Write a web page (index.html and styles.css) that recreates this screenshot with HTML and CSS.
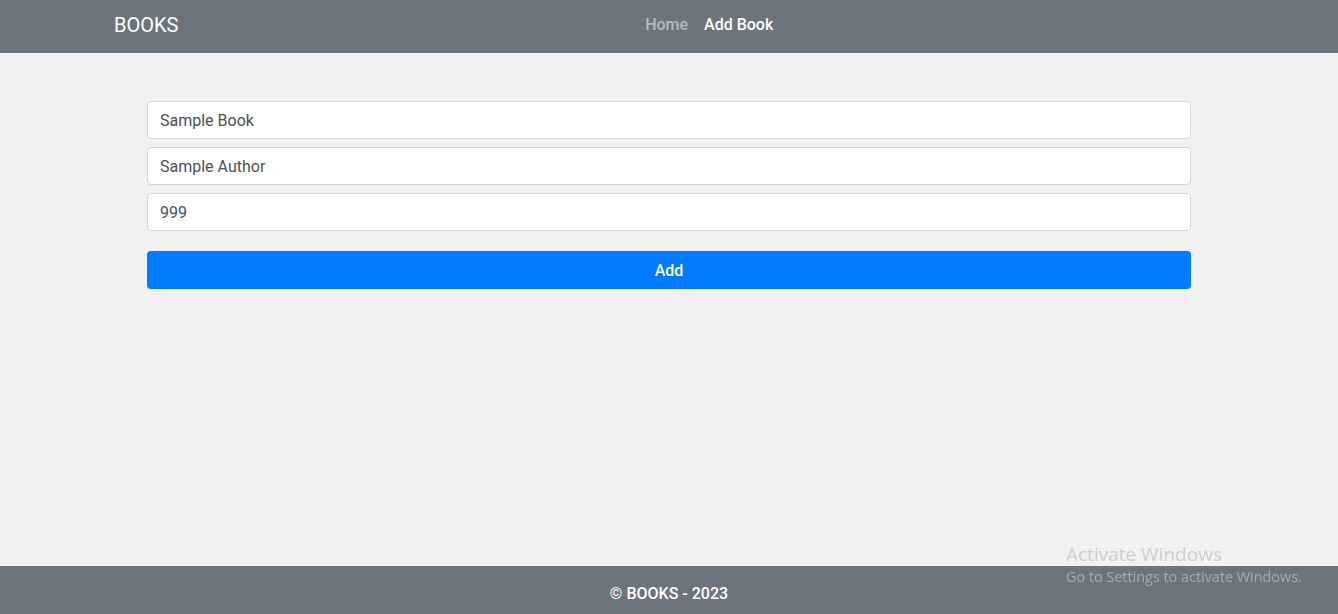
FILE: index.html
```html
<!DOCTYPE html>
<html lang="en">
<head>
<meta charset="utf-8">
<title>Books</title>
<link rel="stylesheet" href="styles.css">
</head>
<body>
<div class="page">
  <header class="navbar">
    <div class="container nav-inner">
      <a class="brand" href="#">BOOKS</a>
      <ul class="nav-links">
        <li><a class="nav-link" href="#">Home</a></li>
        <li><a class="nav-link active" href="#">Add Book</a></li>
      </ul>
    </div>
  </header>
  <main class="main">
    <form class="book-form">
      <input class="field" type="text" value="Sample Book">
      <input class="field" type="text" value="Sample Author">
      <input class="field" type="text" value="999">
      <button class="btn-add" type="button">Add</button>
    </form>
  </main>
  <footer class="footer">© BOOKS - 2023</footer>
</div>
<div class="watermark">
  <div class="wm-title">Activate Windows</div>
  <div class="wm-sub">Go to Settings to activate Windows.</div>
</div>
</body>
</html>
```

FILE: styles.css
```css
* { box-sizing: border-box; }
html, body { margin: 0; padding: 0; }
body {
  font-family: Roboto, "Liberation Sans", Arial, sans-serif;
  font-size: 16px;
  line-height: 1.5;
  color: #212529;
  background: #f1f1f1;
}
.page {
  min-height: 614px;
  display: flex;
  flex-direction: column;
}
.navbar {
  background: #6c757d;
  height: 53px;
  display: flex;
  align-items: center;
}
.container {
  width: 1140px;
  margin: 0 auto;
  padding: 0 15px;
}
.nav-inner {
  display: flex;
  align-items: center;
}
.brand {
  color: #fff;
  text-decoration: none;
  font-size: 20px;
  line-height: 30px;
  margin-right: 16px;
  margin-top: -4px;
}
.nav-links {
  list-style: none;
  margin: 0 auto;
  padding: 0;
  display: flex;
  margin-top: -3px;
}
.nav-link {
  display: block;
  padding: 0 8px;
  text-decoration: none;
  color: rgba(255,255,255,0.5);
  font-weight: 500;
  font-size: 16px;
}
.nav-link.active { color: #fff; }
.main {
  flex: 1;
  padding-top: 48px;
}
.book-form {
  width: 1044px;
  margin: 0 auto;
  display: flex;
  flex-direction: column;
  gap: 8px;
}
.field {
  display: block;
  width: 100%;
  height: 38px;
  padding: 6px 12px;
  font-family: inherit;
  font-size: 16px;
  color: #495057;
  background: #fff;
  border: 1px solid #ced4da;
  border-radius: 4px;
  outline: none;
}
.btn-add {
  margin-top: 12px;
  height: 38px;
  width: 100%;
  border: 0;
  border-radius: 4px;
  background: #007bff;
  color: #fff;
  font-family: inherit;
  font-size: 16px;
  font-weight: 500;
}
.footer {
  height: 48px;
  background: #6c757d;
  color: #fff;
  font-weight: 500;
  text-align: center;
  line-height: 55px;
}
.watermark {
  position: fixed;
  left: 1066px;
  top: 543px;
  color: rgba(200,200,200,0.85);
  font-family: "Open Sans", "Liberation Sans", sans-serif;
  line-height: 1.2;
  pointer-events: none;
}
.wm-title { font-size: 19px; }
.wm-sub { font-size: 14.4px; margin-top: 2px; color: rgba(200,205,210,0.6); }
```
